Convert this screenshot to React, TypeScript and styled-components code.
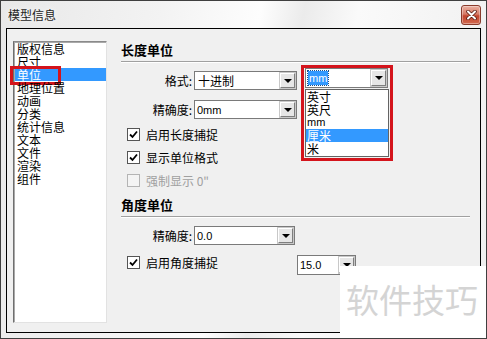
import React from 'react';
import styled, { createGlobalStyle } from 'styled-components';

const GlobalStyle = createGlobalStyle`
  html, body {
    margin: 0;
    padding: 0;
    background: #ffffff;
  }
  body {
    font-family: "Noto Sans CJK SC", "DejaVu Sans", sans-serif;
    font-size: 12px;
    color: #000;
  }
`;

const Window = styled.div`
  position: relative;
  width: 487px;
  height: 339px;
  box-sizing: border-box;
  border: 1px solid #3f3f3f;
  padding: 0 5px 5px 5px;
  display: flex;
  flex-direction: column;
  overflow: hidden;
  background: linear-gradient(100deg, #e8e8e8 0%, #f3f3f3 30%, #fdfdfd 48%, #ebebeb 56%, #fafafa 66%, #eeeeee 100%);
`;

const TitleBar = styled.div`
  height: 27px;
  display: flex;
  align-items: center;
  justify-content: space-between;
  padding-left: 2px;
`;

const Title = styled.span`
  font-size: 12px;
  color: #1e1e1e;
  text-shadow: 0 0 6px #ffffff;
`;

const CloseButton = styled.div`
  width: 20px;
  height: 20px;
  box-sizing: border-box;
  border: 1px solid #8a3b2c;
  border-radius: 3px;
  display: flex;
  align-items: center;
  justify-content: center;
  background: linear-gradient(180deg, #eab1a2 0%, #d77c68 45%, #c2442d 55%, #d26a50 100%);
  box-shadow: inset 0 0 0 1px rgba(255, 255, 255, 0.35);
`;

const Body = styled.div`
  flex: 1;
  border: 1px solid #000;
  background: #f0f0f0;
  display: flex;
  padding: 12px 0 9px 6px;
`;

const NavList = styled.div`
  width: 94px;
  box-sizing: border-box;
  background: #ffffff;
  border: 1px solid;
  border-color: #8a8a8a #e2e2e2 #e2e2e2 #6f6f6f;
  box-shadow: inset 1px 1px 0 #a9a9a9;
  padding-top: 0;
`;

const NavItem = styled.div<{ $selected?: boolean }>`
  position: relative;
  height: 13px;
  line-height: 13px;
  margin-left: 1px;
  padding-left: 2px;
  white-space: nowrap;
  background: ${p => (p.$selected ? '#3399ff' : 'transparent')};
  color: ${p => (p.$selected ? '#ffffff' : '#000000')};
`;

const Marker = styled.div<{ $left: number; $top: number; $w: number; $h: number }>`
  position: absolute;
  left: ${p => p.$left}px;
  top: ${p => p.$top}px;
  width: ${p => p.$w}px;
  height: ${p => p.$h}px;
  box-sizing: border-box;
  border: 3px solid #d4141c;
  pointer-events: none;
`;

const Panel = styled.div`
  flex: 1;
  margin-left: 14px;
  padding: 2px 10px 0 0;
  display: flex;
  flex-direction: column;
`;

const SectionTitle = styled.div<{ $top?: number }>`
  margin-top: ${p => p.$top ?? 0}px;
  font-size: 13px;
  font-weight: bold;
  line-height: 14px;
  padding-bottom: 4px;
  border-bottom: 1px solid #a0a0a0;
  box-shadow: 0 1px 0 #ffffff;
`;

const FieldRow = styled.div<{ $top: number }>`
  margin-top: ${p => p.$top}px;
  display: flex;
  align-items: flex-start;
`;

const FieldLabel = styled.div`
  width: 71px;
  margin-right: 2px;
  text-align: right;
  line-height: 19px;
  white-space: nowrap;
`;

const Combo = styled.div<{ $w: number; $h?: number }>`
  width: ${p => p.$w}px;
  height: ${p => p.$h ?? 19}px;
  box-sizing: border-box;
  border: 1px solid #7a7a7a;
  background: #ffffff;
  display: flex;
  align-items: stretch;
`;

const ComboText = styled.div<{ $latin?: boolean }>`
  flex: 1;
  padding-left: ${p => (p.$latin ? 2 : 3)}px;
  display: flex;
  align-items: center;
  font-family: ${p => (p.$latin ? '"Liberation Sans", Arial, sans-serif' : '"Noto Sans CJK SC", sans-serif')};
  font-size: ${p => (p.$latin ? 11 : 12)}px;
  white-space: nowrap;
  overflow: hidden;
`;

const Picked = styled.span`
  background: #3399ff;
  color: #ffffff;
  padding: 0 1px;
  line-height: 14px;
  outline: 1px dotted #1a4f8a;
`;

const ComboButton = styled.div`
  width: 15px;
  margin: 1px;
  box-sizing: border-box;
  border: 1px solid;
  border-color: #ffffff #7e7e7e #7e7e7e #ffffff;
  background: #e6e6e6;
  box-shadow: 0 0 0 1px #c8c8c8;
  display: flex;
  align-items: center;
  justify-content: center;
`;

const Arrow = styled.div`
  width: 0;
  height: 0;
  border-left: 4px solid transparent;
  border-right: 4px solid transparent;
  border-top: 4px solid #000;
`;

const UnitHolder = styled.div`
  position: relative;
  margin-left: 8px;
  margin-top: -3px;
`;

const DropList = styled.div`
  position: absolute;
  left: 0;
  top: 21px;
  width: 84px;
  box-sizing: border-box;
  border: 1px solid #646464;
  background: #ffffff;
  padding-bottom: 1px;
`;

const DropItem = styled.div<{ $selected?: boolean; $latin?: boolean }>`
  height: 13px;
  line-height: 13px;
  padding-left: 1px;
  font-family: ${p => (p.$latin ? '"Liberation Sans", Arial, sans-serif' : '"Noto Sans CJK SC", sans-serif')};
  font-size: ${p => (p.$latin ? 11 : 12)}px;
  background: ${p => (p.$selected ? '#3399ff' : 'transparent')};
  color: ${p => (p.$selected ? '#ffffff' : '#000000')};
`;

const CheckRow = styled.div<{ $top?: number; $top2?: boolean }>`
  margin-top: ${p => p.$top ?? 0}px;
  height: ${p => (p.$top2 ? 'auto' : '23px')};
  padding-left: 6px;
  padding-top: ${p => (p.$top2 ? 1 : 0)}px;
  display: flex;
  align-items: ${p => (p.$top2 ? 'flex-start' : 'center')};
`;

const CheckBox = styled.div<{ $disabled?: boolean }>`
  width: 13px;
  height: 13px;
  box-sizing: border-box;
  border: 1px solid ${p => (p.$disabled ? '#b4b4b4' : '#555555')};
  background: ${p => (p.$disabled ? '#f4f4f4' : '#ffffff')};
  display: flex;
  align-items: center;
  justify-content: center;
`;

const CheckText = styled.span<{ $disabled?: boolean }>`
  margin-left: 6px;
  line-height: 13px;
  white-space: nowrap;
  color: ${p => (p.$disabled ? '#a0a0a0' : '#000000')};
`;

const SnapRow = styled.div<{ $top: number }>`
  margin-top: ${p => p.$top}px;
  display: grid;
  grid-template-columns: 176px 59px;
  align-items: start;
`;

const Watermark = styled.div`
  position: absolute;
  right: 0;
  bottom: 0;
  width: 146px;
  height: 72px;
  background: #ffffff;
  display: flex;
  align-items: center;
  padding: 0 0 6px 6px;
  box-sizing: border-box;
  font-family: "Noto Sans CJK SC", sans-serif;
  font-size: 33px;
  color: #d4d4d4;
  white-space: nowrap;
`;

const navItems = ['版权信息', '尺寸', '单位', '地理位置', '动画', '分类', '统计信息', '文本', '文件', '渲染', '组件'];

const units = ['英寸', '英尺', 'mm', '厘米', '米'];

function Check({ checked, disabled }: { checked?: boolean; disabled?: boolean }) {
  return (
    <CheckBox $disabled={disabled}>
      {checked && (
        <svg width="9" height="9" viewBox="0 0 9 9">
          <path d="M1 4.5 L3.5 7 L8 1.5" fill="none" stroke="#000" strokeWidth="1.8" />
        </svg>
      )}
    </CheckBox>
  );
}

function Dropdown({ w, h, children }: { w: number; h?: number; children: React.ReactNode }) {
  return (
    <Combo $w={w} $h={h}>
      {children}
      <ComboButton>
        <Arrow />
      </ComboButton>
    </Combo>
  );
}

export default function App() {
  return (
    <>
      <GlobalStyle />
      <Window>
        <TitleBar>
          <Title>模型信息</Title>
          <CloseButton>
            <svg width="11" height="10" viewBox="0 0 11 10">
              <path d="M2 1.5 L9 8.5 M9 1.5 L2 8.5" stroke="#5b1e14" strokeWidth="3.6" strokeLinecap="round" />
              <path d="M2 1.5 L9 8.5 M9 1.5 L2 8.5" stroke="#ffffff" strokeWidth="2" strokeLinecap="round" />
            </svg>
          </CloseButton>
        </TitleBar>
        <Body>
          <NavList>
            {navItems.map(item => (
              <NavItem key={item} $selected={item === '单位'}>
                {item}
                {item === '单位' && <Marker $left={-5} $top={-2} $w={51} $h={19} />}
              </NavItem>
            ))}
          </NavList>
          <Panel>
            <SectionTitle>长度单位</SectionTitle>
            <FieldRow $top={9}>
              <FieldLabel>格式:</FieldLabel>
              <Dropdown w={103}>
                <ComboText>十进制</ComboText>
              </Dropdown>
              <UnitHolder>
                <Dropdown w={83} h={20}>
                  <ComboText $latin>
                    <Picked>mm</Picked>
                  </ComboText>
                </Dropdown>
                <DropList>
                  {units.map(u => (
                    <DropItem key={u} $latin={u === 'mm'} $selected={u === '厘米'}>
                      {u}
                    </DropItem>
                  ))}
                </DropList>
                <Marker $left={-4} $top={-3} $w={92} $h={96} />
              </UnitHolder>
            </FieldRow>
            <FieldRow $top={10}>
              <FieldLabel>精确度:</FieldLabel>
              <Dropdown w={103}>
                <ComboText $latin>0mm</ComboText>
              </Dropdown>
            </FieldRow>
            <CheckRow $top={4}>
              <Check checked />
              <CheckText>启用长度捕捉</CheckText>
            </CheckRow>
            <CheckRow>
              <Check checked />
              <CheckText>显示单位格式</CheckText>
            </CheckRow>
            <CheckRow>
              <Check disabled />
              <CheckText $disabled>强制显示 0"</CheckText>
            </CheckRow>
            <SectionTitle $top={6}>角度单位</SectionTitle>
            <FieldRow $top={9}>
              <FieldLabel>精确度:</FieldLabel>
              <Dropdown w={101}>
                <ComboText $latin>0.0</ComboText>
              </Dropdown>
            </FieldRow>
            <SnapRow $top={10}>
              <CheckRow $top2>
                <Check checked />
                <CheckText>启用角度捕捉</CheckText>
              </CheckRow>
              <Dropdown w={59} h={20}>
                <ComboText $latin>15.0</ComboText>
              </Dropdown>
            </SnapRow>
          </Panel>
        </Body>
        <Watermark>软件技巧</Watermark>
      </Window>
    </>
  );
}
